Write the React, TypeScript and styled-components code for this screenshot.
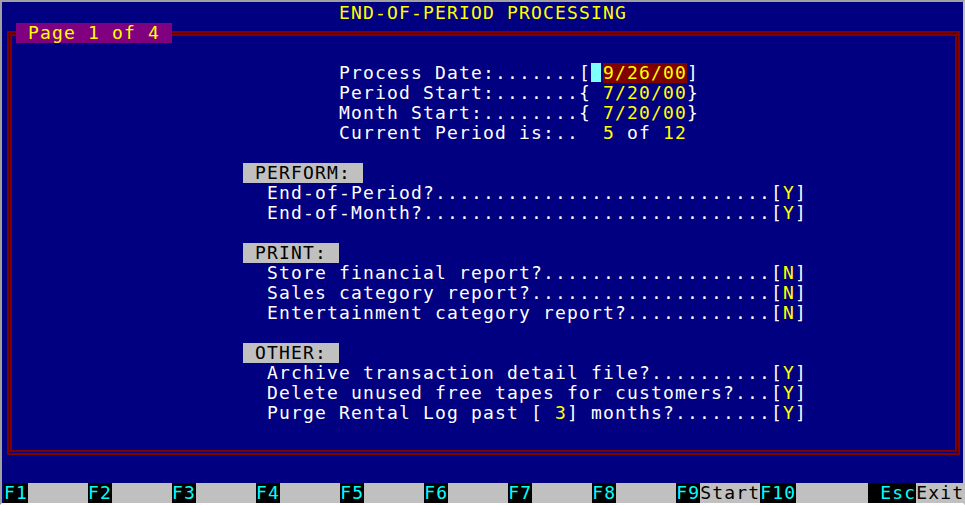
import React from "react";
import styled, { createGlobalStyle } from "styled-components";

const BLUE = "#000080";
const RED = "#800000";
const GREY = "#c0c0c0";
const YELLOW = "#ffff00";
const CYAN = "#00ffff";
const CW = 12; // one text-mode cell

const GlobalStyle = createGlobalStyle`
  html, body {
    margin: 0;
    padding: 0;
    background: #ffffff;
  }
  body {
    font-family: "DejaVu Sans Mono", "Liberation Mono", monospace;
  }
`;

const Window = styled.div`
  box-sizing: border-box;
  width: 965px;
  height: 505px;
  border-top: 2px solid #a0a0a0;
  border-left: 2px solid #a0a0a0;
  border-right: 2px solid ${GREY};
  border-bottom: 2px solid #ffffff;
`;

const Screen = styled.div`
  box-sizing: border-box;
  height: 100%;
  padding: 1px 0 0 2px;
  background: ${BLUE};
  color: #ffffff;
  display: flex;
  flex-direction: column;
  overflow: hidden;
  font-size: 18px;
  line-height: 20px;
  letter-spacing: 1.164px;
  white-space: pre;
`;

const Line = styled.div<{ $indent?: number }>`
  height: 20px;
  padding-left: ${(p) => (p.$indent || 0) * CW - 1}px;
`;

const Title = styled(Line)`
  color: ${YELLOW};
`;

const Frame = styled.div`
  position: relative;
  box-sizing: border-box;
  width: 953px;
  margin: 8px 0 0 3px;
  border: 2px solid ${RED};
  padding: 1px;
`;

const Inner = styled.div`
  border: 2px solid ${RED};
  padding: 27px 0 27px 4px;
  display: flex;
  flex-direction: column;
  gap: 20px;
`;

const Badge = styled.div`
  position: absolute;
  top: -10px;
  left: 7px;
  height: 20px;
  background: #800080;
  color: ${YELLOW};
`;

const Block = styled.div`
  display: flex;
  flex-direction: column;
`;

const Hi = styled.span`
  color: ${YELLOW};
`;

const Cursor = styled.span`
  display: inline-block;
  vertical-align: top;
  width: 10px;
  height: 19px;
  margin-right: 2px;
  background: #80ffff;
`;

const Field = styled.span`
  display: inline-block;
  vertical-align: top;
  height: 20px;
  background: ${RED};
  color: ${YELLOW};
`;

const Tag = styled.span`
  display: inline-block;
  vertical-align: top;
  height: 20px;
  background: ${GREY};
  color: #000000;
`;

const FBar = styled.div`
  display: flex;
  margin-top: auto;
  height: 20px;
  background: ${GREY};
`;

const FKey = styled.span`
  background: #000000;
  color: ${CYAN};
`;

const FLabel = styled.span`
  color: #000000;
`;

// frame content starts at column 1
const at = (col: number) => col - 1;

function Option({ len, value, children }: { len: number; value: string; children: React.ReactNode }) {
  const dots = ".".repeat(64 - 22 - len);
  return (
    <Line $indent={at(22)}>
      {children}
      {dots}[<Hi>{value}</Hi>]
    </Line>
  );
}

function Section({ tag, children }: { tag: string; children: React.ReactNode }) {
  return (
    <Block>
      <Line $indent={at(20)}>
        <Tag>{tag}</Tag>
      </Line>
      {children}
    </Block>
  );
}

const keys: [string, string][] = [
  ["F1", "     "],
  ["F2", "     "],
  ["F3", "     "],
  ["F4", "     "],
  ["F5", "     "],
  ["F6", "     "],
  ["F7", "     "],
  ["F8", "     "],
  ["F9", "Start"],
  ["F10", "      "],
  [" Esc", "Exit"],
];

export default function App() {
  return (
    <>
      <GlobalStyle />
      <Window>
        <Screen>
          <Title $indent={28}>END-OF-PERIOD PROCESSING</Title>
          <Frame>
            <Badge> Page 1 of 4 </Badge>
            <Inner>
              <Block>
                <Line $indent={at(28)}>
                  Process Date:.......[<Cursor />
                  <Field>9/26/00</Field>]
                </Line>
                <Line $indent={at(28)}>
                  Period Start:.......{"{"}
                  <Hi> 7/20/00</Hi>
                  {"}"}
                </Line>
                <Line $indent={at(28)}>
                  Month Start:........{"{"}
                  <Hi> 7/20/00</Hi>
                  {"}"}
                </Line>
                <Line $indent={at(28)}>
                  Current Period is:..  <Hi>5</Hi> of <Hi>12</Hi>
                </Line>
              </Block>

              <Section tag=" PERFORM: ">
                <Option len={14} value="Y">End-of-Period?</Option>
                <Option len={13} value="Y">End-of-Month?</Option>
              </Section>

              <Section tag=" PRINT: ">
                <Option len={23} value="N">Store financial report?</Option>
                <Option len={22} value="N">Sales category report?</Option>
                <Option len={30} value="N">Entertainment category report?</Option>
              </Section>

              <Section tag=" OTHER: ">
                <Option len={32} value="Y">Archive transaction detail file?</Option>
                <Option len={39} value="Y">Delete unused free tapes for customers?</Option>
                <Option len={34} value="Y">
                  {"Purge Rental Log past [ "}
                  <Hi>3</Hi>
                  {"] months?"}
                </Option>
              </Section>
            </Inner>
          </Frame>

          <FBar>
            {keys.map(([k, label]) => (
              <React.Fragment key={k}>
                <FKey>{k}</FKey>
                <FLabel>{label}</FLabel>
              </React.Fragment>
            ))}
          </FBar>
        </Screen>
      </Window>
    </>
  );
}
